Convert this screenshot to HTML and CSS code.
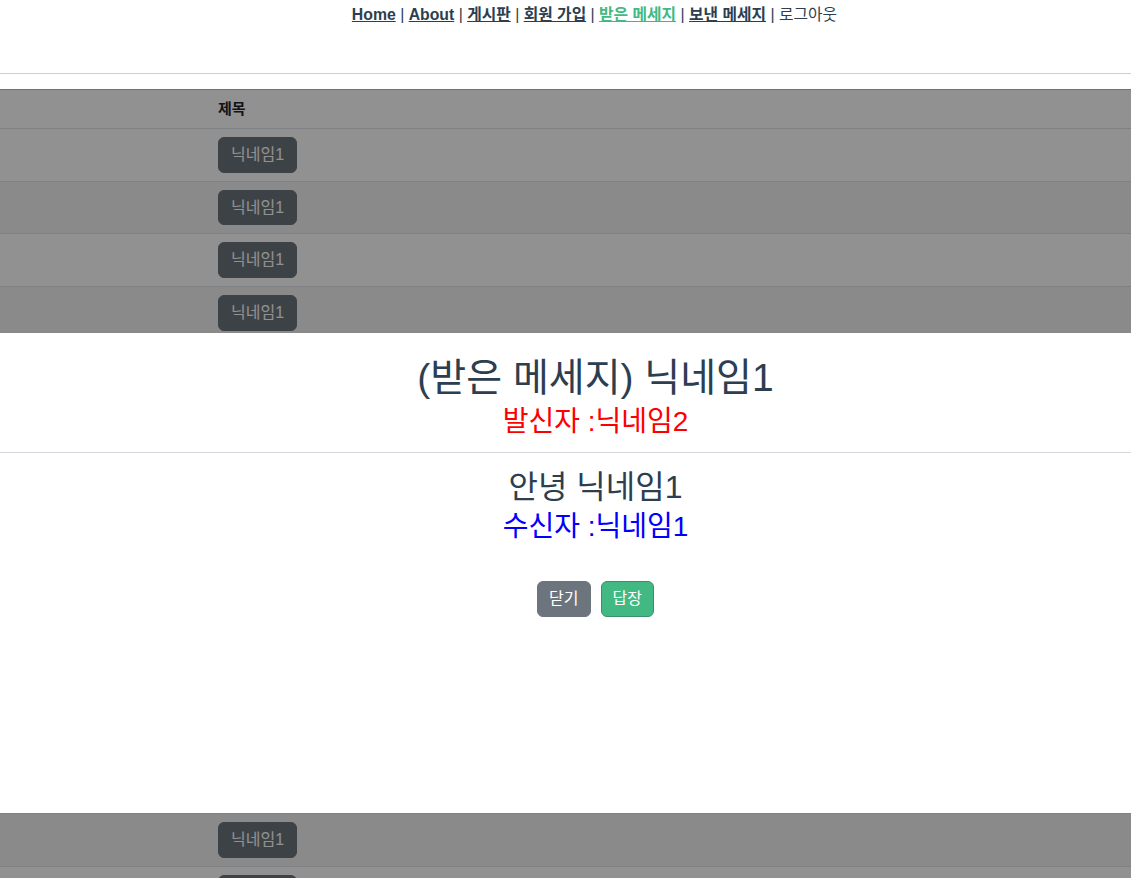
FILE: index.html
```html
<!DOCTYPE html>
<html lang="ko">
<head>
<meta charset="utf-8">
<title>받은 메세지</title>
<link rel="stylesheet" href="styles.css">
</head>
<body>
<div class="app">
  <nav class="nav">
    <a href="#">Home</a> | <a href="#">About</a> | <a href="#">게시판</a> | <a href="#">회원 가입</a> | <a href="#" class="active">받은 메세지</a> | <a href="#">보낸 메세지</a> | <span class="logout">로그아웃</span>
  </nav>
  <hr class="divider">
  <div class="table-wrap">
    <table class="msg-table">
      <thead>
        <tr><th class="col-num"></th><th>제목</th><th></th></tr>
      </thead>
      <tbody>
        <tr><td></td><td><button class="btn btn-secondary">닉네임1</button></td><td></td></tr>
        <tr><td></td><td><button class="btn btn-secondary">닉네임1</button></td><td></td></tr>
        <tr><td></td><td><button class="btn btn-secondary">닉네임1</button></td><td></td></tr>
        <tr><td></td><td><button class="btn btn-secondary">닉네임1</button></td><td></td></tr>
        <tr><td></td><td><button class="btn btn-secondary">닉네임1</button></td><td></td></tr>
        <tr><td></td><td><button class="btn btn-secondary">닉네임1</button></td><td></td></tr>
        <tr><td></td><td><button class="btn btn-secondary">닉네임1</button></td><td></td></tr>
        <tr><td></td><td><button class="btn btn-secondary">닉네임1</button></td><td></td></tr>
        <tr><td></td><td><button class="btn btn-secondary">닉네임1</button></td><td></td></tr>
        <tr><td></td><td><button class="btn btn-secondary">닉네임1</button></td><td></td></tr>
        <tr><td></td><td><button class="btn btn-secondary">닉네임1</button></td><td></td></tr>
        <tr><td></td><td><button class="btn btn-secondary">닉네임1</button></td><td></td></tr>
        <tr><td></td><td><button class="btn btn-secondary">닉네임1</button></td><td></td></tr>
        <tr><td></td><td><button class="btn btn-secondary">닉네임1</button></td><td></td></tr>
        <tr><td></td><td><button class="btn btn-secondary">닉네임1</button></td><td></td></tr>
      </tbody>
    </table>
    <div class="backdrop"></div>
    <div class="modal">
      <div class="modal-header">
        <h2 class="modal-title">(받은 메세지) 닉네임1</h2>
        <p class="sender">발신자 :닉네임2</p>
      </div>
      <div class="modal-body">
        <p class="content">안녕 닉네임1</p>
        <p class="receiver">수신자 :닉네임1</p>
        <div class="actions">
          <button class="btn btn-close">닫기</button>
          <button class="btn btn-reply">답장</button>
        </div>
      </div>
    </div>
  </div>
</div>
</body>
</html>
```
FILE: styles.css
```css
* { box-sizing: border-box; }

body {
  margin: 0;
  font-family: "Liberation Sans", "Noto Sans CJK KR", sans-serif;
  color: #2c3e50;
  background: #fff;
}

.app { text-align: center; }

.nav {
  padding: 5px 0 0 58px;
  height: 73px;
  font-size: 15.8px;
  line-height: 20px;
}

.nav a {
  color: #2c3e50;
  font-weight: bold;
  text-decoration: underline;
}

.nav a.active { color: #42b983; }

.nav .logout { color: #2c3e50; }

.divider {
  margin: 0 0 15px 0;
  border: 0;
  border-top: 1px solid #cfcfcf;
  height: 0;
}

.table-wrap { position: relative; }

.msg-table {
  width: 100%;
  border-collapse: collapse;
  text-align: left;
  border-top: 1px solid #c8c8c8;
}

.msg-table th,
.msg-table td {
  padding: 8px;
  border-bottom: 1px solid #dee2e6;
  vertical-align: middle;
}

.msg-table th {
  font-size: 15px;
  line-height: 22px;
  font-weight: bold;
  color: #212529;
}

.msg-table .col-num { width: 210px; }

.msg-table tbody tr:nth-child(even) { background: rgba(0, 0, 0, 0.05); }

.btn {
  font-family: inherit;
  font-size: 16px;
  line-height: 22px;
  padding: 6px 11px;
  border-radius: 6px;
  border: 1px solid transparent;
  color: #fff;
  cursor: pointer;
}

.btn-secondary {
  background: #6c757d;
  border-color: #6c757d;
  display: block;
  padding: 6px 12px;
  line-height: 21.7px;
}

.backdrop {
  position: absolute;
  inset: 0;
  background: rgba(0, 0, 0, 0.43);
  z-index: 10;
}

.modal {
  position: absolute;
  top: 244px;
  left: 0;
  right: 0;
  height: 480px;
  background: #fff;
  z-index: 20;
  text-align: center;
}

.modal-header {
  padding: 23px 0 14px 60px;
  border-bottom: 1px solid #d3d7db;
}

.modal-title {
  margin: 0;
  font-size: 39px;
  line-height: 44px;
  font-weight: normal;
}

.sender {
  margin: 6px 0 0;
  font-size: 28px;
  line-height: 32px;
  color: red;
}

.modal-body { padding: 16px 0 0 60px; }

.content {
  margin: 0;
  font-size: 32px;
  line-height: 36px;
}

.receiver {
  margin: 6px 0 0;
  font-size: 28px;
  line-height: 32px;
  color: blue;
}

.actions {
  margin-top: 38px;
  display: flex;
  justify-content: center;
  gap: 10px;
}

.btn-close {
  background: #6c757d;
  border-color: #6c757d;
}

.btn-reply {
  background: #42b983;
  border-color: #3a8f6a;
}
```
